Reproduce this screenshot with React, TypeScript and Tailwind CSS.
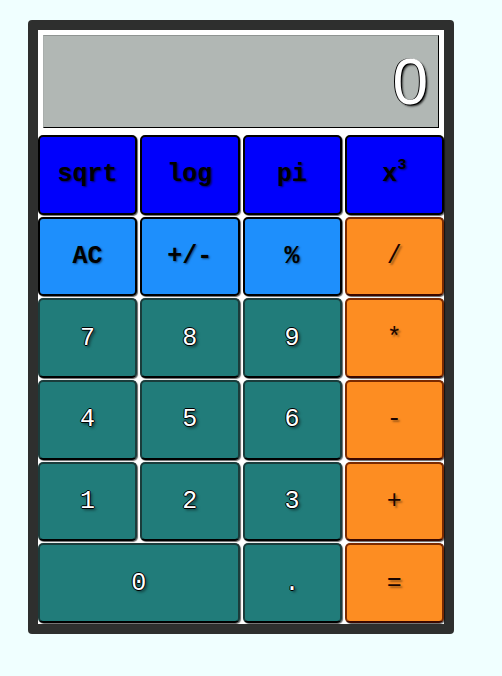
import React from "react";

type Key = { label: React.ReactNode; kind: "fn" | "ctl" | "num" | "op"; wide?: boolean };

const keys: Key[] = [
  { label: "sqrt", kind: "fn" },
  { label: "log", kind: "fn" },
  { label: "pi", kind: "fn" },
  { label: <>x<sup className="text-[15px] -top-[9px]">3</sup></>, kind: "fn" },
  { label: "AC", kind: "ctl" },
  { label: "+/-", kind: "ctl" },
  { label: "%", kind: "ctl" },
  { label: "/", kind: "op" },
  { label: "7", kind: "num" },
  { label: "8", kind: "num" },
  { label: "9", kind: "num" },
  { label: "*", kind: "op" },
  { label: "4", kind: "num" },
  { label: "5", kind: "num" },
  { label: "6", kind: "num" },
  { label: "-", kind: "op" },
  { label: "1", kind: "num" },
  { label: "2", kind: "num" },
  { label: "3", kind: "num" },
  { label: "+", kind: "op" },
  { label: "0", kind: "num", wide: true },
  { label: ".", kind: "num" },
  { label: "=", kind: "op" },
];

const kindClass: Record<Key["kind"], string> = {
  fn: "bg-[#0000fc] text-black font-bold border-black [text-shadow:1px_1px_2px_rgba(0,0,0,0.6)]",
  ctl: "bg-[#1e8ffc] text-black font-bold border-black [text-shadow:1px_1px_2px_rgba(0,0,0,0.5)]",
  num: "bg-[#217c7a] text-white border-[#1a3c3b] border-b-black [text-shadow:-1px_0_0_#000,1px_0_0_#000,0_-1px_0_#000,0_1px_0_#000,2px_2px_3px_rgba(0,0,0,0.6)]",
  op: "bg-[#fd8d22] text-[#1a0500] border-[#7a2a00] border-b-[#3a0800] [text-shadow:2px_2px_2px_rgba(0,0,0,0.35)]",
};

export default function App() {
  return (
    <div className="min-h-[676px] bg-[#f0ffff] pt-[20px] pl-[28px]">
      <div className="w-[426px] h-[614px] rounded-[4px] bg-[#2e2f2e] p-[10px]">
        <div className="h-full bg-white flex flex-col">
          <div className="mx-[5px] mt-[5px] h-[93px] bg-[#b1b7b4] border border-t-[#8f9492] border-l-[#a9aeac] border-r-black border-b-black flex items-center justify-end pr-[10px]">
            <span className="font-['Liberation_Sans',Arial,sans-serif] text-[64px] leading-none text-white [text-shadow:-1px_0_0_#000,1px_1px_0_#000,2px_2px_2px_rgba(0,0,0,0.7)]">
              0
            </span>
          </div>
          <div className="mt-[7px] grid grid-cols-4 grid-rows-6 gap-x-[3px] gap-y-[2px] h-[488px]">
            {keys.map((k, i) => (
              <button
                key={i}
                className={`${k.wide ? "col-span-2" : ""} ${kindClass[k.kind]} rounded-[5px] border-2 shadow-[1px_1px_1px_rgba(0,0,0,0.6)] font-['Liberation_Mono','Courier_New',monospace] text-[25px] leading-none flex items-center justify-center`}
              >
                {k.label}
              </button>
            ))}
          </div>
        </div>
      </div>
    </div>
  );
}
